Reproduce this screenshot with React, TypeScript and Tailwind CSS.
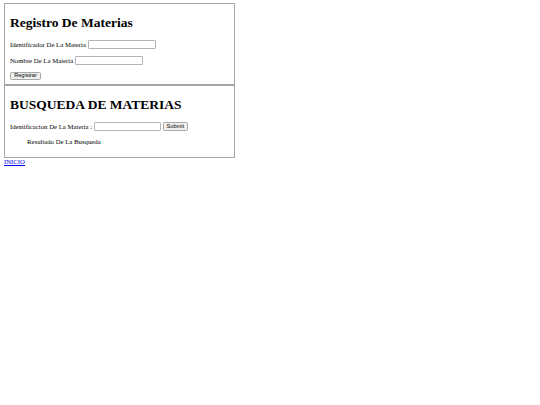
import React from "react";

const serif = "font-['Liberation_Serif',_'Times_New_Roman',_serif]";

const Field: React.FC<{ label: string; width?: string }> = ({ label, width = "w-[68px]" }) => (
  <div className="flex items-center h-[9px] text-[6.75px] leading-[9px] whitespace-pre">
    <span>{label} </span>
    <input
      type="text"
      className={`${width} h-[9px] border border-[#b4b4b4] rounded-[1px] bg-white outline-none`}
    />
  </div>
);

const SmallButton: React.FC<{ text: string; width: string; height: string }> = ({ text, width, height }) => (
  <button
    className={`${width} ${height} flex items-center justify-center bg-[#efefef] border border-[#a8a8a8] rounded-[1.5px] text-[5.6px] leading-none text-black font-['Liberation_Sans',_Arial,_sans-serif]`}
  >
    {text}
  </button>
);

export default function App() {
  return (
    <div className={`w-[540px] h-[405px] bg-white text-black pt-[3px] pl-[4px] ${serif}`}>
      <section className="w-[231px] h-[82px] border border-[#a6a6a6] pl-[5px] pt-[11px]">
        <h1 className="text-[13.5px] leading-[16px] font-bold">Registro De Materias</h1>
        <div className="mt-[9px]">
          <Field label="Identificador De La Materia" />
        </div>
        <div className="mt-[7px]">
          <Field label="Nombre De La Materia" />
        </div>
        <div className="mt-[7px]">
          <SmallButton text="Registrar" width="w-[31px]" height="h-[8px]" />
        </div>
      </section>
      <section className="w-[231px] h-[73px] border border-[#a6a6a6] pl-[5px] pt-[11px]">
        <h1 className="text-[13.5px] leading-[16px] font-bold">BUSQUEDA DE MATERIAS</h1>
        <div className="mt-[9px] flex items-center gap-[2px]">
          <Field label="Identificacion De La Materia :" width="w-[67px]" />
          <SmallButton text="Submit" width="w-[25px]" height="h-[9px]" />
        </div>
        <p className="mt-[7px] pl-[17px] text-[6.75px] leading-[8px]">Resultado De La Busqueda</p>
      </section>
      <a href="#" className="block w-fit text-[6.75px] leading-[7px] text-[#0000ee] underline">
        INICIO
      </a>
    </div>
  );
}
